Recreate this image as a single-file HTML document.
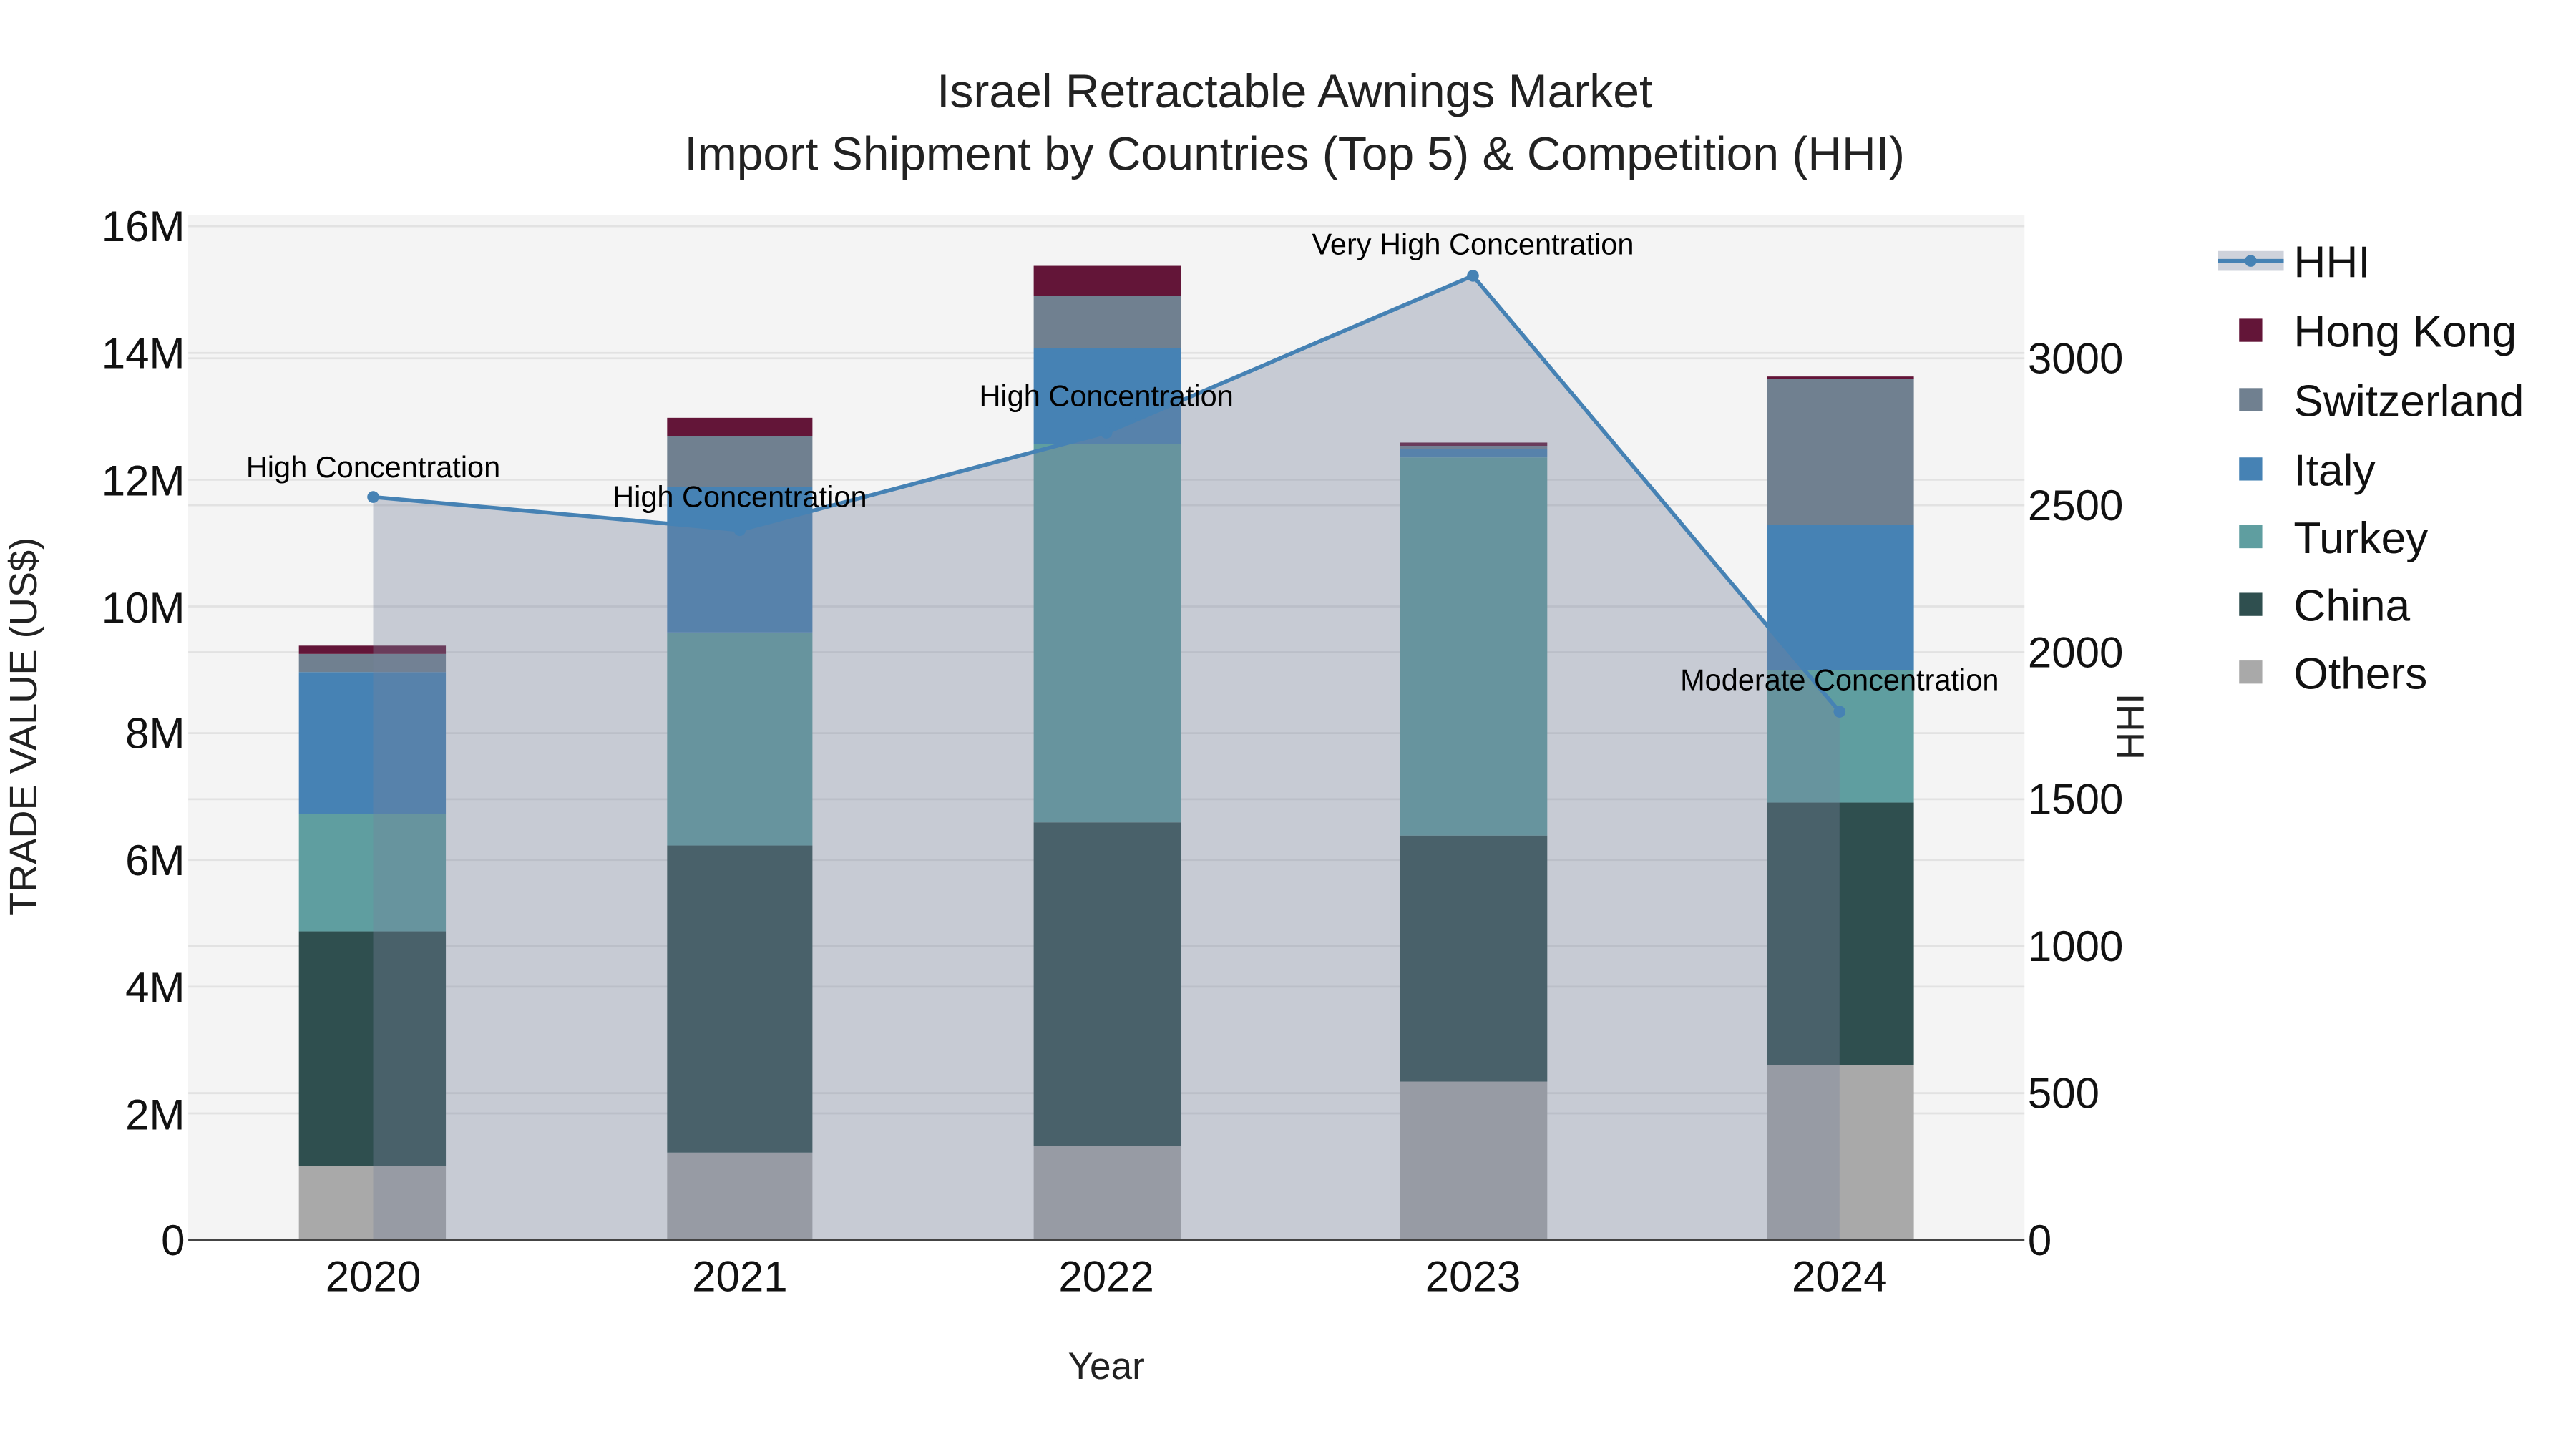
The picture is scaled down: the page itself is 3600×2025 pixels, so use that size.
<!DOCTYPE html>
<html><head><meta charset="utf-8"><style>
html,body{margin:0;padding:0;background:#fff;}
svg{display:block;font-family:"Liberation Sans",sans-serif;}
</style></head><body>
<svg width="3600" height="2025" viewBox="0 0 1560 877.5" xmlns="http://www.w3.org/2000/svg">
<rect x="0" y="0" width="1560" height="877.5" fill="#fff"/>
<rect x="114" y="130" width="1112" height="621" fill="#f4f4f4"/>
<g stroke="#e2e2e2" stroke-width="1.2">
<line x1="114" x2="1226" y1="674.25" y2="674.25"/><line x1="114" x2="1226" y1="597.5" y2="597.5"/>
<line x1="114" x2="1226" y1="520.75" y2="520.75"/><line x1="114" x2="1226" y1="444" y2="444"/>
<line x1="114" x2="1226" y1="367.25" y2="367.25"/><line x1="114" x2="1226" y1="290.5" y2="290.5"/>
<line x1="114" x2="1226" y1="213.75" y2="213.75"/><line x1="114" x2="1226" y1="137" y2="137"/>
<line x1="114" x2="1226" y1="662" y2="662"/><line x1="114" x2="1226" y1="573" y2="573"/>
<line x1="114" x2="1226" y1="484" y2="484"/><line x1="114" x2="1226" y1="395" y2="395"/>
<line x1="114" x2="1226" y1="306" y2="306"/><line x1="114" x2="1226" y1="217" y2="217"/>
</g>
<g>
<rect x="181" y="706" width="89" height="45" fill="#a9a9a9"/>
<rect x="181" y="564" width="89" height="142" fill="#2f4f4f"/>
<rect x="181" y="493" width="89" height="71" fill="#5f9ea0"/>
<rect x="181" y="407" width="89" height="86" fill="#4682b4"/>
<rect x="181" y="396" width="89" height="11" fill="#708090"/>
<rect x="181" y="391" width="89" height="5" fill="#631538"/>

<rect x="404" y="698" width="88" height="53" fill="#a9a9a9"/>
<rect x="404" y="512" width="88" height="186" fill="#2f4f4f"/>
<rect x="404" y="383" width="88" height="129" fill="#5f9ea0"/>
<rect x="404" y="295" width="88" height="88" fill="#4682b4"/>
<rect x="404" y="264" width="88" height="31" fill="#708090"/>
<rect x="404" y="253" width="88" height="11" fill="#631538"/>

<rect x="626" y="694" width="89" height="57" fill="#a9a9a9"/>
<rect x="626" y="498" width="89" height="196" fill="#2f4f4f"/>
<rect x="626" y="269" width="89" height="229" fill="#5f9ea0"/>
<rect x="626" y="211" width="89" height="58" fill="#4682b4"/>
<rect x="626" y="179" width="89" height="32" fill="#708090"/>
<rect x="626" y="161" width="89" height="18" fill="#631538"/>

<rect x="848" y="655" width="89" height="96" fill="#a9a9a9"/>
<rect x="848" y="506" width="89" height="149" fill="#2f4f4f"/>
<rect x="848" y="277" width="89" height="229" fill="#5f9ea0"/>
<rect x="848" y="272" width="89" height="5" fill="#4682b4"/>
<rect x="848" y="270" width="89" height="2" fill="#708090"/>
<rect x="848" y="268" width="89" height="2" fill="#631538"/>

<rect x="1070" y="645" width="89" height="106" fill="#a9a9a9"/>
<rect x="1070" y="486" width="89" height="159" fill="#2f4f4f"/>
<rect x="1070" y="406" width="89" height="80" fill="#5f9ea0"/>
<rect x="1070" y="318" width="89" height="88" fill="#4682b4"/>
<rect x="1070" y="229" width="89" height="89" fill="#708090"/>
<rect x="1070" y="228" width="89" height="1.5" fill="#631538"/>
</g>
<polygon points="226,751 226,301 448,321 670,262 892,167 1114,431 1114,751" fill="rgba(120,131,154,0.36)"/>
<polyline points="226,301 448,321 670,262 892,167 1114,431" fill="none" stroke="#4682b4" stroke-width="2.4"/>
<g fill="#4682b4"><circle cx="226" cy="301" r="3.6"/><circle cx="448" cy="321" r="3.6"/><circle cx="670" cy="262" r="3.6"/><circle cx="892" cy="167" r="3.6"/><circle cx="1114" cy="431" r="3.6"/></g>
<line x1="114" x2="1226" y1="751" y2="751" stroke="#444" stroke-width="1.5"/>
<g font-size="18" fill="#000" text-anchor="middle">
<text x="226" y="289">High Concentration</text>
<text x="448" y="307">High Concentration</text>
<text x="670" y="246">High Concentration</text>
<text x="892" y="154">Very High Concentration</text>
<text x="1114" y="418">Moderate Concentration</text>
</g>
<g font-size="28.6" fill="#222" text-anchor="middle">
<text x="784" y="65">Israel Retractable Awnings Market</text>
<text x="784" y="103">Import Shipment by Countries (Top 5) &amp; Competition (HHI)</text>
</g>
<g font-size="26" fill="#111" text-anchor="end">
<text x="112" y="760">0</text><text x="112" y="684">2M</text><text x="112" y="607">4M</text>
<text x="112" y="530">6M</text><text x="112" y="453">8M</text><text x="112" y="377">10M</text>
<text x="112" y="300">12M</text><text x="112" y="223">14M</text><text x="112" y="146">16M</text>
</g>
<g font-size="26" fill="#111">
<text x="1228" y="760">0</text><text x="1228" y="671">500</text><text x="1228" y="582">1000</text>
<text x="1228" y="493">1500</text><text x="1228" y="404">2000</text><text x="1228" y="315">2500</text>
<text x="1228" y="226">3000</text>
</g>
<g font-size="26" fill="#111" text-anchor="middle">
<text x="226" y="782">2020</text><text x="448" y="782">2021</text><text x="670" y="782">2022</text>
<text x="892" y="782">2023</text><text x="1114" y="782">2024</text>
</g>
<text x="670" y="835" font-size="23" fill="#222" text-anchor="middle">Year</text>
<text transform="translate(22,440) rotate(-90)" font-size="23.5" fill="#222" text-anchor="middle">TRADE VALUE (US$)</text>
<text transform="translate(1298,440) rotate(-90)" font-size="23.5" fill="#222" text-anchor="middle">HHI</text>
<rect x="1343" y="152" width="40" height="12" fill="rgba(120,131,154,0.36)"/>
<line x1="1343" x2="1383" y1="158" y2="158" stroke="#4682b4" stroke-width="2.4"/>
<circle cx="1363" cy="158" r="3.6" fill="#4682b4"/>
<g>
<rect x="1356" y="193" width="14" height="14" fill="#631538"/>
<rect x="1356" y="235" width="14" height="14" fill="#708090"/>
<rect x="1356" y="277" width="14" height="14" fill="#4682b4"/>
<rect x="1356" y="318" width="14" height="14" fill="#5f9ea0"/>
<rect x="1356" y="359" width="14" height="14" fill="#2f4f4f"/>
<rect x="1356" y="400" width="14" height="14" fill="#a9a9a9"/>
</g>
<g font-size="27" fill="#111">
<text x="1389" y="168">HHI</text><text x="1389" y="210">Hong Kong</text><text x="1389" y="252">Switzerland</text>
<text x="1389" y="294">Italy</text><text x="1389" y="335">Turkey</text><text x="1389" y="376">China</text>
<text x="1389" y="417">Others</text>
</g>
</svg>
</body></html>
